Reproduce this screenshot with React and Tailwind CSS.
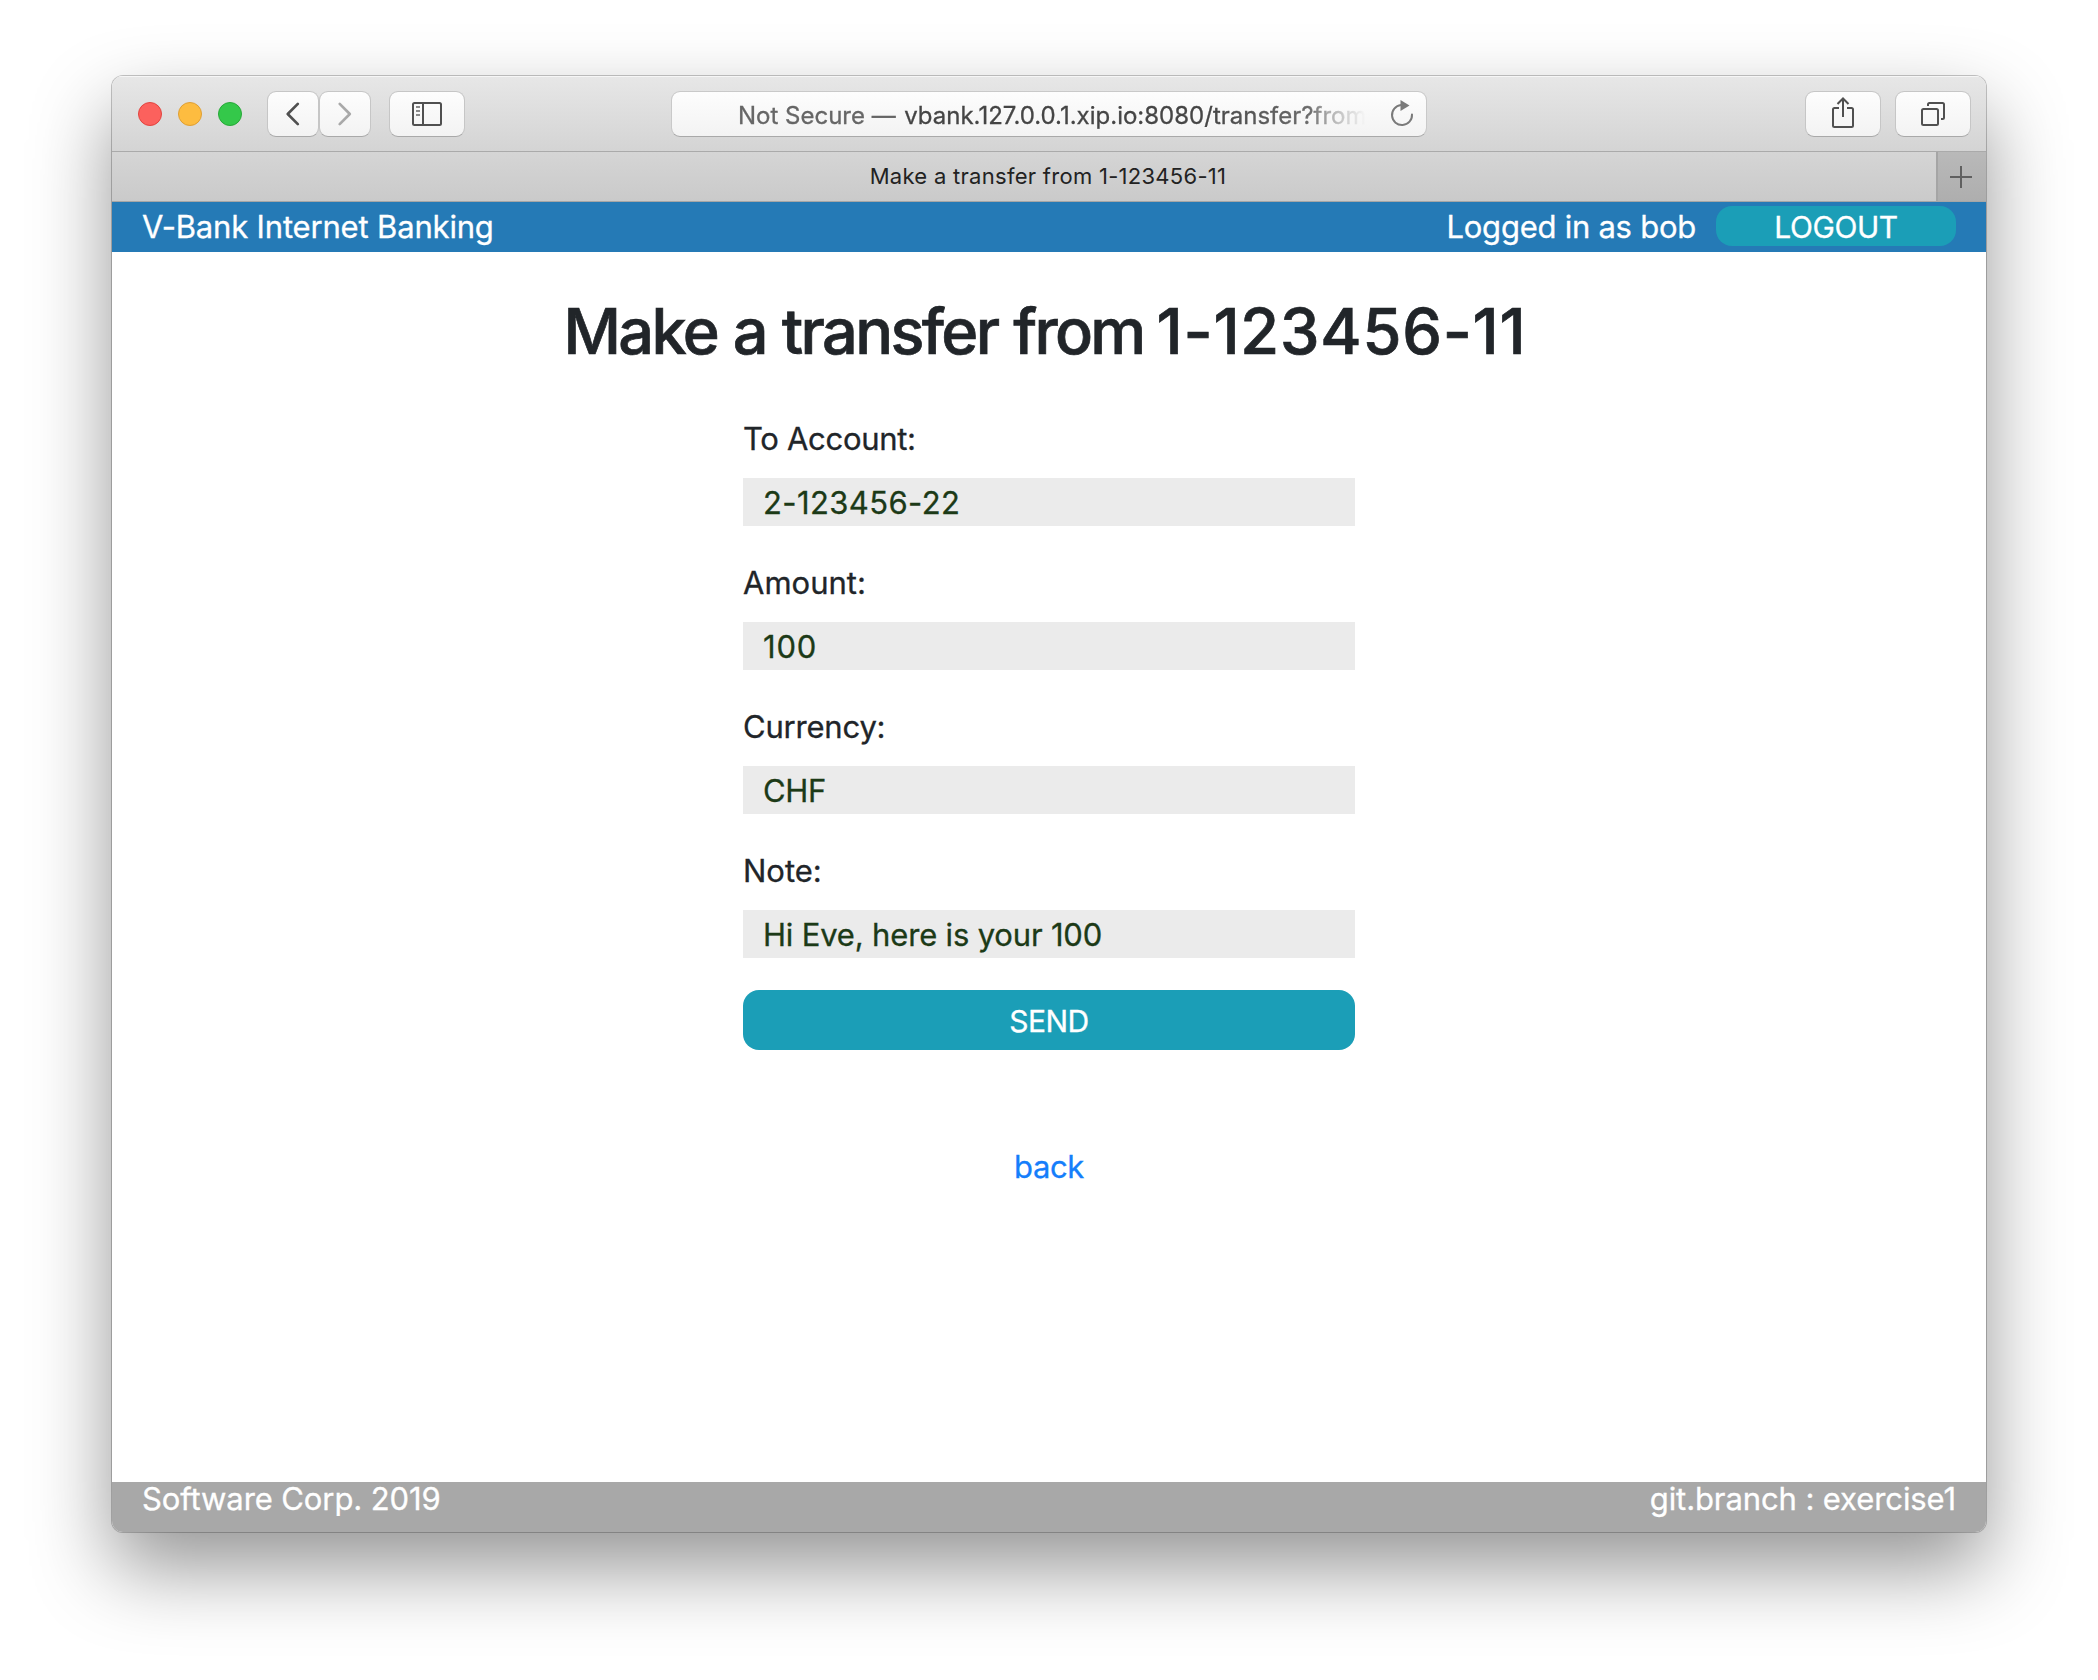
function ToolButton({ className, children }) {
  return (
    <button
      className={
        "flex h-[46px] items-center justify-center rounded-[9px] border border-[#c6c6c6] border-b-[#a9a9a9] bg-linear-to-b from-[#fdfdfd] to-[#f3f3f3] bg-clip-padding " +
        className
      }
    >
      {children}
    </button>
  );
}

function Toolbar() {
  return (
    <div className="flex h-[76px] shrink-0 items-start border-b border-[#aaaaaa] bg-linear-to-b from-[#e7e7e7] to-[#d4d4d4] pt-[15px] pr-[15px] pl-[26px] shadow-[inset_0_1px_0_#f6f6f6]">
      <div className="flex h-[46px] items-center gap-4">
        <span className="size-6 rounded-full border border-[#e2443f] bg-[#fc615d]" />
        <span className="size-6 rounded-full border border-[#df9f34] bg-[#fdbc40]" />
        <span className="size-6 rounded-full border border-[#27a838] bg-[#34c84a]" />
      </div>
      <div className="ml-[25px] flex">
        <ToolButton className="w-[52px]">
          <svg width="52" height="44" viewBox="0 0 52 44" fill="none" stroke="#505050" strokeWidth="2.8" strokeLinecap="round" strokeLinejoin="round">
            <path d="M31 11.5 20.5 22 31 32.5" />
          </svg>
        </ToolButton>
        <ToolButton className="w-[52px]">
          <svg width="52" height="44" viewBox="0 0 52 44" fill="none" stroke="#a9a9a9" strokeWidth="2.8" strokeLinecap="round" strokeLinejoin="round">
            <path d="M20.500 11.5 31 22 20.500 32.5" />
          </svg>
        </ToolButton>
      </div>
      <ToolButton className="ml-[18px] w-[76px]">
        <svg width="30" height="24" viewBox="0 0 30 24" fill="none" stroke="#505050" strokeWidth="2">
          <rect x="1" y="1" width="28" height="22" rx="1.5" />
          <path d="M11 1v22" />
          <path d="M4 5h4M4 9h4M4 13h4" stroke="#8a8a8a" />
        </svg>
      </ToolButton>
      <div className="ml-[206px] flex h-[46px] w-[756px] items-center rounded-[9px] border border-[#c9c9c9] border-b-[#a9a9a9] bg-linear-to-b from-[#fdfdfd] to-[#f3f3f3] bg-clip-padding pr-[11px] pl-[66px] text-[24px]">
        <div className="flex w-[640px] gap-[8.500px] mask-[linear-gradient(to_right,black_470px,rgba(0,0,0,0.78)_572px,rgba(0,0,0,0.4)_592px,transparent_628px)] pt-[3px] whitespace-nowrap text-[#454545]">
          <span className="text-[#666]">Not Secure —</span>
          <span>vbank.127.0.0.1.xip.io:8080/transfer?from</span>
        </div>
        <svg className="ml-auto" width="26" height="28" viewBox="0 0 26 28">
          <path d="M12 5.1A10 10 0 1 0 23 14.5" fill="none" stroke="#7a7a7a" strokeWidth="2" strokeLinecap="round" />
          <path d="M11.500 0v11l9-5.500z" fill="#7a7a7a" />
        </svg>
      </div>
      <ToolButton className="ml-auto w-[76px]">
        <svg width="24" height="32" viewBox="0 0 24 32" className="mt-[-4px]" fill="none" stroke="#505050" strokeWidth="2">
          <path d="M8 12H3.5Q2 12 2 13.500V29.500Q2 31 3.500 31H20.500Q22 31 22 29.500V13.500Q22 12 20.500 12H16" />
          <path d="M12 21V3M6.500 8 12 2.500 17.500 8" />
        </svg>
      </ToolButton>
      <ToolButton className="ml-[14px] w-[76px]">
        <svg width="24" height="24" viewBox="0 0 24 24" fill="none" stroke="#505050" strokeWidth="2">
          <rect x="1" y="7" width="16" height="16" rx="1.500" />
          <path d="M7 4V2.500Q7 1 8.500 1H21.500Q23 1 23 2.500V15.500Q23 17 21.500 17H20" />
        </svg>
      </ToolButton>
    </div>
  );
}

function TabBar() {
  return (
    <div className="flex h-[50px] shrink-0 border-b border-[#a6a6a6] bg-linear-to-b from-[#d5d5d5] to-[#cacaca]">
      <div className="flex flex-1 items-center justify-center pl-[48px] text-[22px] tracking-[0.28px] text-[#222] [-webkit-text-stroke:0]">
        Make a transfer from 1-123456-11
      </div>
      <div className="flex w-[50px] items-center justify-center border-l-2 border-[#a5a5a5] bg-linear-to-b from-[#b9b9b9] to-[#aeaeae] pr-[2px]">
        <svg width="22" height="22" viewBox="0 0 22 22" stroke="#606060" strokeWidth="2">
          <path d="M11 0v22M0 11h22" />
        </svg>
      </div>
    </div>
  );
}

const fields = [
  { label: "To Account:", value: "2-123456-22", labelTracking: "tracking-[-0.3px]", valueTracking: "tracking-[0.4px]" },
  { label: "Amount:", value: "100", labelTracking: "tracking-normal", valueTracking: "tracking-[0.8px]" },
  { label: "Currency:", value: "CHF", labelTracking: "tracking-[-0.2px]", valueTracking: "tracking-[-0.3px]" },
  { label: "Note:", value: "Hi Eve, here is your 100", labelTracking: "tracking-normal", valueTracking: "tracking-[-0.17px]" },
];

function TransferForm() {
  return (
    <form className="mt-[44px] w-[612px] text-[31px] leading-[50px]">
      {fields.map((f) => (
        <div key={f.label} className="mb-8">
          <label className={"block h-[64px] text-[#212529] " + f.labelTracking}>{f.label}</label>
          <div className={"h-12 bg-[#ebebeb] pl-5 text-[#1c3a17] " + f.valueTracking}>{f.value}</div>
        </div>
      ))}
      <button className="flex h-[60px] w-full items-center justify-center rounded-[16px] bg-[#1b9eb7] pt-[2px] text-[30px] tracking-[-0.5px] text-white">
        SEND
      </button>
    </form>
  );
}

export default function App() {
  return (
    <div className="h-[1680px] w-[2098px] overflow-hidden bg-white pt-[76px] pl-[112px] font-['Inter',sans-serif]">
      <div className="flex h-[1456px] w-[1874px] flex-col overflow-hidden rounded-[11px] bg-white shadow-[0_0_0_1px_rgba(0,0,0,0.22),0_36px_80px_rgba(0,0,0,0.42)] [-webkit-text-stroke:0.3px]">
        <Toolbar />
        <TabBar />
        <header className="flex h-[50px] shrink-0 items-center bg-[#257ab6] px-[30px] text-[31px] tracking-[-0.17px] text-white">
          <span>V-Bank Internet Banking</span>
          <span className="ml-auto tracking-[-0.25px]">Logged in as bob</span>
          <button className="mt-[-2px] ml-5 flex h-10 w-[240px] items-center justify-center rounded-[16px] bg-[#1b9eb7] pt-[2px] text-[30px] tracking-[-0.45px]">
            LOGOUT
          </button>
        </header>
        <main className="flex flex-1 flex-col items-center">
          <h1 className="mt-[40px] mr-[8px] text-[63px] leading-[78px] font-medium tracking-[-2.65px] text-[#212529] [-webkit-text-stroke:0.7px] [word-spacing:1.700px]">
            Make a transfer from <span className="ml-[-3px] tracking-[0.8px]">1-123456-11</span>
          </h1>
          <TransferForm />
          <a className="mt-[93px] text-[31px] leading-[48px] tracking-[-0.4px] text-[#157efb]">back</a>
        </main>
        <footer className="flex h-[50px] shrink-0 justify-between bg-[#a8a8a8] px-[30px] text-[31px] leading-[34px] tracking-[-0.1px] text-white">
          <span>Software Corp. 2019</span>
          <span>git.branch : exercise1</span>
        </footer>
      </div>
    </div>
  );
}
